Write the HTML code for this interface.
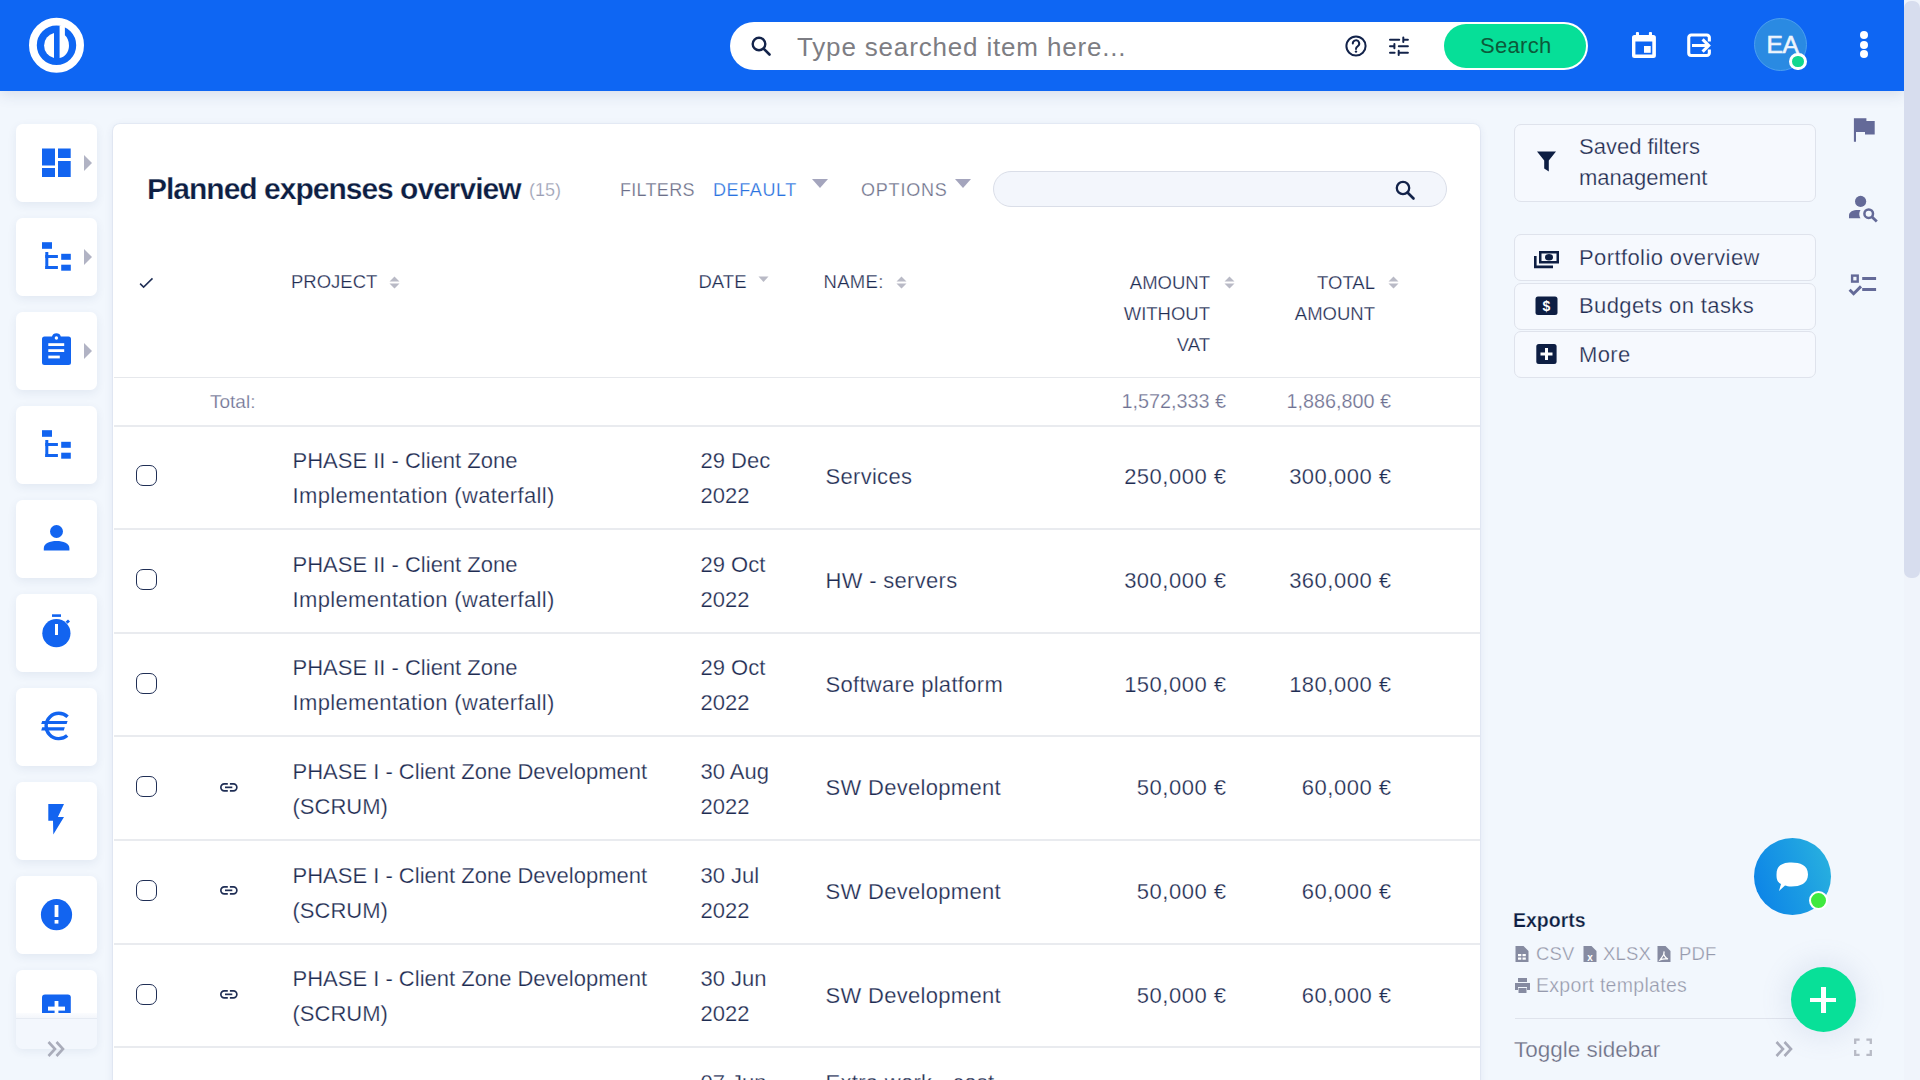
<!DOCTYPE html>
<html><head><meta charset="utf-8">
<style>
*{box-sizing:border-box;margin:0;padding:0}
html,body{width:1920px;height:1080px;overflow:hidden}
body{font-family:"Liberation Sans",sans-serif;background:#f2f7fd;position:relative;color:#1d2b4f}
.abs{position:absolute}
#hdr{left:0;top:0;width:1904px;height:91px;background:#0e66f3;box-shadow:0 3px 14px rgba(60,80,130,.16)}
#sb{left:1904px;top:0;width:16px;height:1080px;background:#f0f4fb}
#sbthumb{left:1904px;top:1px;width:16px;height:577px;background:#d7ddee;border-radius:7px}
.lcard{position:absolute;left:16px;width:81px;height:78px;background:#fff;border-radius:6.5px;box-shadow:0 3px 10px rgba(40,60,120,.08)}
.lcard svg{position:absolute}
.arr{position:absolute;left:68px;top:31px;width:0;height:0;border-top:8px solid transparent;border-bottom:8px solid transparent;border-left:8px solid #b1b3c4}
#main{left:113px;top:124px;width:1367px;height:1000px;background:#fff;border-radius:7px;box-shadow:0 0 0 1px rgba(60,80,130,.05),0 2px 10px rgba(40,60,120,.09)}
.t{position:absolute;white-space:nowrap;line-height:1}
#main ~ .t{-webkit-text-stroke:0.25px #fff}
.hline{position:absolute;left:114px;width:1366px;height:2px;background:#e9ebef}
.chk{position:absolute;left:136px;width:21px;height:21px;border:1.7px solid #1f2e55;border-radius:7px;background:#fff}
.rbox{position:absolute;left:1514px;width:302px;background:#f6f9fe;border:1px solid #dfe3ec;border-radius:7px}
</style></head><body>
<div id="hdr" class="abs"></div>
<!-- logo -->
<svg class="abs" style="left:0;top:0" width="120" height="90" viewBox="0 0 120 90">
  <circle cx="56.5" cy="45.3" r="23.6" fill="none" stroke="#fff" stroke-width="7.8"/>
  <path d="M54 32.9 A12.9 12.9 0 0 0 54 58 Z" fill="#fff"/>
  <path d="M59.6 25.5 H64.9 V35.3 C67.3 37.2 69 41 69 45.8 C69 52.3 64.8 57.3 59.6 58 Z" fill="#fff"/>
</svg>
<!-- search -->
<div class="abs" style="left:730px;top:22px;width:858px;height:48px;background:#fff;border-radius:24px"></div>
<svg class="abs" style="left:750px;top:35px" width="22" height="22" viewBox="0 0 22 22"><circle cx="9" cy="9" r="6.3" fill="none" stroke="#13234a" stroke-width="2.4"/><path d="M13.6 13.6 L19.5 19.5" stroke="#13234a" stroke-width="2.6" stroke-linecap="round"/></svg>
<div class="t" style="left:797px;top:34px;font-size:26px;color:#7d7d83;letter-spacing:0.83px">Type searched item here...</div>
<svg class="abs" style="left:1343px;top:33px" width="26" height="26" viewBox="0 0 26 26"><circle cx="13" cy="13" r="9.6" fill="none" stroke="#13234a" stroke-width="2"/><path d="M9.8 10.6 A3.2 3.2 0 1 1 14.6 13.3 C13.4 14 13 14.6 13 16" fill="none" stroke="#13234a" stroke-width="2" stroke-linecap="round"/><circle cx="13" cy="18.6" r="1.2" fill="#13234a"/></svg>
<svg class="abs" style="left:1387px;top:35px" width="24" height="22" viewBox="0 0 24 22"><g stroke="#13234a" stroke-width="2" stroke-linecap="round" fill="none"><path d="M3 4.85 H12.2 M16.3 2.6 V6.9 M16.3 4.85 H20.9 M3 11.2 H7.4 M7.4 9.1 V13.2 M11.8 11.2 H20.9 M3 17.85 H7.6 M11.7 15.7 V20 M11.7 17.85 H20.9"/></g></svg>
<div class="abs" style="left:1444px;top:24px;width:142px;height:44px;background:#06df98;border-radius:22px"></div>
<div class="t" style="left:1480px;top:35px;font-size:22px;color:#0c5a3a;letter-spacing:0.3px">Search</div>
<!-- calendar -->
<svg class="abs" style="left:1630px;top:30px" width="28" height="30" viewBox="0 0 28 30"><g fill="#fff"><rect x="5.9" y="2" width="3.1" height="5" rx="1"/><rect x="18.9" y="2" width="3.1" height="5" rx="1"/><path d="M4.5 5.1 H23.4 A2.5 2.5 0 0 1 25.9 7.6 V25.5 A2.5 2.5 0 0 1 23.4 28 H4.5 A2.5 2.5 0 0 1 2 25.5 V7.6 A2.5 2.5 0 0 1 4.5 5.1 Z M5.4 11.4 V24.6 H22.3 V11.4 Z" fill-rule="evenodd"/><rect x="14" y="16" width="6.7" height="6.8"/></g></svg>
<!-- logout -->
<svg class="abs" style="left:1685px;top:31px" width="28" height="28" viewBox="0 0 28 28"><g fill="none" stroke="#fff" stroke-width="3.1"><path d="M24.35 10.6 V6.6 A2.5 2.5 0 0 0 21.85 4.05 H6.25 A2.5 2.5 0 0 0 3.75 6.6 V21.95 A2.5 2.5 0 0 0 6.25 24.45 H21.85 A2.5 2.5 0 0 0 24.35 21.95 V18.4"/><path d="M7 14.5 H24 M17.6 8.4 L23.7 14.5 L17.6 20.6"/></g></svg>
<!-- avatar -->
<div class="abs" style="left:1754px;top:18px;width:53px;height:53px;border-radius:50%;background:#2a8ae2;border:1px solid #4b9ff0"></div>
<div class="t" style="left:1766.5px;top:33.4px;font-size:24.5px;color:#eef5fd;letter-spacing:-0.3px;-webkit-text-stroke:0.6px #eef5fd">EA</div>
<div class="abs" style="left:1789.4px;top:52.5px;width:17.6px;height:17.6px;border-radius:50%;background:#12d68f;border:3px solid #fff"></div>
<!-- kebab -->
<div class="abs" style="left:1860px;top:31px;width:8px;height:8px;border-radius:50%;background:#fff"></div>
<div class="abs" style="left:1860px;top:40.5px;width:8px;height:8px;border-radius:50%;background:#fff"></div>
<div class="abs" style="left:1860px;top:50px;width:8px;height:8px;border-radius:50%;background:#fff"></div>
<div id="sb" class="abs"></div>
<div id="sbthumb" class="abs"></div>
<!-- main card -->
<div id="main" class="abs"></div>
<div class="t" style="left:147px;top:174.4px;font-size:30px;font-weight:700;letter-spacing:-1px;color:#0d1e43">Planned expenses overview</div>
<div class="t" style="left:529px;top:180.8px;font-size:18px;color:#9a9db2">(15)</div>
<div class="t" style="left:620px;top:180.6px;font-size:18px;letter-spacing:0.3px;color:#6c6f89">FILTERS</div>
<div class="t" style="left:713px;top:180.6px;font-size:18px;letter-spacing:0.6px;color:#2a72e0">DEFAULT</div>
<div class="abs" style="left:812px;top:179px;width:0;height:0;border-left:8.5px solid transparent;border-right:8.5px solid transparent;border-top:9px solid #a4a5bd"></div>
<div class="t" style="left:861px;top:180.6px;font-size:18px;letter-spacing:0.8px;color:#6c6f89">OPTIONS</div>
<div class="abs" style="left:955px;top:179px;width:0;height:0;border-left:8.5px solid transparent;border-right:8.5px solid transparent;border-top:9px solid #a4a5bd"></div>
<div class="abs" style="left:993px;top:171px;width:454px;height:36px;background:#f3f6fc;border:1px solid #dadee8;border-radius:18px"></div>
<svg class="abs" style="left:1394px;top:179px" width="22" height="22" viewBox="0 0 22 22"><circle cx="9" cy="9" r="6.2" fill="none" stroke="#13234a" stroke-width="2.3"/><path d="M13.5 13.5 L19.5 19.5" stroke="#13234a" stroke-width="2.6" stroke-linecap="round"/></svg>
<!-- table header -->
<svg class="abs" style="left:137px;top:274px" width="18" height="16" viewBox="0 0 18 16"><path d="M3.1 9.6 L6.6 13.1 L15.5 4.4" fill="none" stroke="#1f2e55" stroke-width="1.5"/></svg>
<div class="t" style="left:291px;top:273.3px;font-size:18.5px;color:#1e2c52">PROJECT</div>
<svg class="abs" style="left:388.5px;top:276px" width="11" height="13" viewBox="0 0 11 13"><path d="M5.5 0.5 L10.5 5.5 H0.5 Z M0.5 7.5 H10.5 L5.5 12.5 Z" fill="#b9bac6"/></svg>
<div class="t" style="left:698.5px;top:273.3px;font-size:18.5px;color:#1e2c52">DATE</div>
<svg class="abs" style="left:758px;top:276px" width="11" height="7" viewBox="0 0 11 7"><path d="M0.5 0.5 H10.5 L5.5 6 Z" fill="#b9bac6"/></svg>
<div class="t" style="left:823.5px;top:273.3px;font-size:18.5px;letter-spacing:0.3px;color:#1e2c52">NAME:</div>
<svg class="abs" style="left:896px;top:276px" width="11" height="13" viewBox="0 0 11 13"><path d="M5.5 0.5 L10.5 5.5 H0.5 Z M0.5 7.5 H10.5 L5.5 12.5 Z" fill="#b9bac6"/></svg>
<div class="t" style="left:1010px;width:200px;text-align:right;top:267.1px;font-size:18.5px;line-height:31px;white-space:normal;color:#1e2c52">AMOUNT<br>WITHOUT<br>VAT</div>
<svg class="abs" style="left:1223.5px;top:276px" width="11" height="13" viewBox="0 0 11 13"><path d="M5.5 0.5 L10.5 5.5 H0.5 Z M0.5 7.5 H10.5 L5.5 12.5 Z" fill="#b9bac6"/></svg>
<div class="t" style="left:1175px;width:200px;text-align:right;top:267.1px;font-size:18.5px;line-height:31px;white-space:normal;color:#1e2c52">TOTAL<br>AMOUNT</div>
<svg class="abs" style="left:1388px;top:276px" width="11" height="13" viewBox="0 0 11 13"><path d="M5.5 0.5 L10.5 5.5 H0.5 Z M0.5 7.5 H10.5 L5.5 12.5 Z" fill="#b9bac6"/></svg>
<div class="hline" style="top:377px;height:1px;background:#e6e8ec"></div>
<div class="t" style="left:210px;top:392.4px;font-size:19px;color:#6e7191">Total:</div>
<div class="t" style="left:1026px;width:200px;text-align:right;top:391.7px;font-size:19.8px;color:#6e7191">1,572,333 €</div>
<div class="t" style="left:1191px;width:200px;text-align:right;top:391.7px;font-size:19.8px;color:#6e7191">1,886,800 €</div>
<div class="hline" style="top:424.5px;height:2px"></div>
<div class="t" style="left:292.5px;top:443.1px;font-size:22px;line-height:35px;color:#1e2c52">PHASE II - Client Zone<br><span style="letter-spacing:0.35px">Implementation (waterfall)</span></div>
<div class="t" style="left:700.5px;top:443.1px;font-size:22px;line-height:35px;color:#1e2c52">29 Dec<br>2022</div>
<div class="t" style="left:825.5px;top:466.4px;font-size:22px;letter-spacing:0.3px;color:#1e2c52">Services</div>
<div class="t" style="left:1026px;width:200px;text-align:right;top:466.4px;font-size:22px;letter-spacing:0.5px;margin-left:0.5px;color:#1e2c52">250,000 €</div>
<div class="t" style="left:1191px;width:200px;text-align:right;top:466.4px;font-size:22px;letter-spacing:0.5px;margin-left:0.5px;color:#1e2c52">300,000 €</div>
<div class="chk" style="top:465.4px"></div>
<div class="hline" style="top:528.1px;height:2px"></div>
<div class="t" style="left:292.5px;top:546.7px;font-size:22px;line-height:35px;color:#1e2c52">PHASE II - Client Zone<br><span style="letter-spacing:0.35px">Implementation (waterfall)</span></div>
<div class="t" style="left:700.5px;top:546.7px;font-size:22px;line-height:35px;color:#1e2c52">29 Oct<br>2022</div>
<div class="t" style="left:825.5px;top:570.0px;font-size:22px;letter-spacing:0.3px;color:#1e2c52">HW - servers</div>
<div class="t" style="left:1026px;width:200px;text-align:right;top:570.0px;font-size:22px;letter-spacing:0.5px;margin-left:0.5px;color:#1e2c52">300,000 €</div>
<div class="t" style="left:1191px;width:200px;text-align:right;top:570.0px;font-size:22px;letter-spacing:0.5px;margin-left:0.5px;color:#1e2c52">360,000 €</div>
<div class="chk" style="top:569.1px"></div>
<div class="hline" style="top:631.7px;height:2px"></div>
<div class="t" style="left:292.5px;top:650.4px;font-size:22px;line-height:35px;color:#1e2c52">PHASE II - Client Zone<br><span style="letter-spacing:0.35px">Implementation (waterfall)</span></div>
<div class="t" style="left:700.5px;top:650.4px;font-size:22px;line-height:35px;color:#1e2c52">29 Oct<br>2022</div>
<div class="t" style="left:825.5px;top:673.7px;font-size:22px;letter-spacing:0.3px;color:#1e2c52">Software platform</div>
<div class="t" style="left:1026px;width:200px;text-align:right;top:673.7px;font-size:22px;letter-spacing:0.5px;margin-left:0.5px;color:#1e2c52">150,000 €</div>
<div class="t" style="left:1191px;width:200px;text-align:right;top:673.7px;font-size:22px;letter-spacing:0.5px;margin-left:0.5px;color:#1e2c52">180,000 €</div>
<div class="chk" style="top:672.7px"></div>
<div class="hline" style="top:735.4px;height:2px"></div>
<div class="t" style="left:292.5px;top:754.1px;font-size:22px;line-height:35px;color:#1e2c52">PHASE I - Client Zone Development<br>(SCRUM)</div>
<div class="t" style="left:700.5px;top:754.1px;font-size:22px;line-height:35px;color:#1e2c52">30 Aug<br>2022</div>
<div class="t" style="left:825.5px;top:777.4px;font-size:22px;letter-spacing:0.3px;color:#1e2c52">SW Development</div>
<div class="t" style="left:1026px;width:200px;text-align:right;top:777.4px;font-size:22px;letter-spacing:0.5px;margin-left:0.5px;color:#1e2c52">50,000 €</div>
<div class="t" style="left:1191px;width:200px;text-align:right;top:777.4px;font-size:22px;letter-spacing:0.5px;margin-left:0.5px;color:#1e2c52">60,000 €</div>
<div class="chk" style="top:776.4px"></div>
<svg class="abs" style="left:218px;top:780.5px" width="22" height="14" viewBox="0 0 22 14"><g fill="none" stroke="#1f2e55" stroke-width="1.7"><path d="M9.8 2.9 H6.3 A3.45 3.45 0 0 0 6.3 9.8 H9.8"/><path d="M11.9 2.9 H15.4 A3.45 3.45 0 0 1 15.4 9.8 H11.9"/><path d="M7 6.35 H14.3"/></g></svg>
<div class="hline" style="top:839.1px;height:2px"></div>
<div class="t" style="left:292.5px;top:857.8px;font-size:22px;line-height:35px;color:#1e2c52">PHASE I - Client Zone Development<br>(SCRUM)</div>
<div class="t" style="left:700.5px;top:857.8px;font-size:22px;line-height:35px;color:#1e2c52">30 Jul<br>2022</div>
<div class="t" style="left:825.5px;top:881.1px;font-size:22px;letter-spacing:0.3px;color:#1e2c52">SW Development</div>
<div class="t" style="left:1026px;width:200px;text-align:right;top:881.1px;font-size:22px;letter-spacing:0.5px;margin-left:0.5px;color:#1e2c52">50,000 €</div>
<div class="t" style="left:1191px;width:200px;text-align:right;top:881.1px;font-size:22px;letter-spacing:0.5px;margin-left:0.5px;color:#1e2c52">60,000 €</div>
<div class="chk" style="top:880.1px"></div>
<svg class="abs" style="left:218px;top:884.2px" width="22" height="14" viewBox="0 0 22 14"><g fill="none" stroke="#1f2e55" stroke-width="1.7"><path d="M9.8 2.9 H6.3 A3.45 3.45 0 0 0 6.3 9.8 H9.8"/><path d="M11.9 2.9 H15.4 A3.45 3.45 0 0 1 15.4 9.8 H11.9"/><path d="M7 6.35 H14.3"/></g></svg>
<div class="hline" style="top:942.7px;height:2px"></div>
<div class="t" style="left:292.5px;top:961.4px;font-size:22px;line-height:35px;color:#1e2c52">PHASE I - Client Zone Development<br>(SCRUM)</div>
<div class="t" style="left:700.5px;top:961.4px;font-size:22px;line-height:35px;color:#1e2c52">30 Jun<br>2022</div>
<div class="t" style="left:825.5px;top:984.7px;font-size:22px;letter-spacing:0.3px;color:#1e2c52">SW Development</div>
<div class="t" style="left:1026px;width:200px;text-align:right;top:984.7px;font-size:22px;letter-spacing:0.5px;margin-left:0.5px;color:#1e2c52">50,000 €</div>
<div class="t" style="left:1191px;width:200px;text-align:right;top:984.7px;font-size:22px;letter-spacing:0.5px;margin-left:0.5px;color:#1e2c52">60,000 €</div>
<div class="chk" style="top:983.8px"></div>
<svg class="abs" style="left:218px;top:987.9px" width="22" height="14" viewBox="0 0 22 14"><g fill="none" stroke="#1f2e55" stroke-width="1.7"><path d="M9.8 2.9 H6.3 A3.45 3.45 0 0 0 6.3 9.8 H9.8"/><path d="M11.9 2.9 H15.4 A3.45 3.45 0 0 1 15.4 9.8 H11.9"/><path d="M7 6.35 H14.3"/></g></svg>
<div class="hline" style="top:1046.4px;height:2px"></div>
<div class="t" style="left:292.5px;top:1065.1px;font-size:22px;line-height:35px;color:#1e2c52"><br></div>
<div class="t" style="left:700.5px;top:1065.1px;font-size:22px;line-height:35px;color:#1e2c52">07 Jun<br>2022</div>
<div class="t" style="left:825.5px;top:1065.1px;font-size:22px;letter-spacing:0.3px;line-height:35px;color:#1e2c52">Extra work - cost</div>
<!-- right sidebar -->
<div class="rbox" style="top:124px;height:78px"></div>
<svg class="abs" style="left:1536px;top:150px" width="21" height="23" viewBox="0 0 21 23"><path d="M1 1.5 H20 L12.8 10.5 V21.5 L8.2 18.5 V10.5 Z" fill="#0d1e43"/></svg>
<div class="t" style="left:1579px;top:131.2px;font-size:22px;line-height:31px;color:#1e2c52">Saved filters<br>management</div>
<div class="rbox" style="top:234px;height:47px"></div>
<div class="rbox" style="top:283px;height:47px"></div>
<div class="rbox" style="top:331px;height:47px"></div>
<svg class="abs" style="left:1532px;top:249px" width="28" height="22" viewBox="0 0 28 22"><g fill="#0d1e43"><path d="M7 2 H27 V14.5 H7 Z M9.5 4.4 V12.1 H24.5 V4.4 Z" fill-rule="evenodd"/><ellipse cx="17" cy="8.3" rx="4" ry="3.2"/><path d="M2 7 H4.6 V16.6 H21 V19.2 H2 Z"/></g></svg>
<svg class="abs" style="left:1535px;top:296px" width="23" height="20" viewBox="0 0 23 20"><rect x="0.5" y="0.5" width="22" height="18.5" rx="2.5" fill="#0d1e43"/><text x="11.5" y="15" text-anchor="middle" font-family="Liberation Sans" font-weight="700" font-size="14" fill="#fff">$</text></svg>
<svg class="abs" style="left:1536px;top:344px" width="21" height="20" viewBox="0 0 21 20"><rect x="0.3" y="0" width="20.3" height="20" rx="2.5" fill="#0d1e43"/><rect x="9" y="4" width="3" height="12" fill="#fff"/><rect x="4.5" y="8.5" width="12" height="3" fill="#fff"/></svg>
<div class="t" style="left:1579px;top:246.6px;font-size:22px;letter-spacing:0.4px;color:#1e2c52">Portfolio overview</div>
<div class="t" style="left:1579px;top:295.4px;font-size:22px;letter-spacing:0.4px;color:#1e2c52">Budgets on tasks</div>
<div class="t" style="left:1579px;top:343.8px;font-size:22px;letter-spacing:0.4px;color:#1e2c52">More</div>
<!-- right icon column -->
<svg class="abs" style="left:1852px;top:116px" width="26" height="28" viewBox="0 0 26 28"><path d="M1.9 2.2 H14.4 V5 H22.7 V18.6 H13 V15.9 H4 V25.8 H1.9 Z" fill="#646a98"/></svg>
<svg class="abs" style="left:1848px;top:194px" width="32" height="32" viewBox="0 0 32 32"><g fill="#646a98"><circle cx="12.6" cy="7.4" r="5.6"/><path d="M1 24.3 V21.5 C1 17.8 5 16 10 16 H12.6 C11.6 17.3 11.2 19 11.3 20.8 C11.4 22.2 11.8 23.3 12.5 24.3 Z"/></g><circle cx="20.7" cy="19.7" r="4.3" fill="none" stroke="#646a98" stroke-width="2.5"/><path d="M23.8 22.8 L28.8 27.6" stroke="#646a98" stroke-width="2.8"/></svg>
<svg class="abs" style="left:1848px;top:272px" width="30" height="26" viewBox="0 0 30 26"><g fill="none" stroke="#646a98"><rect x="4.1" y="3.6" width="5.6" height="6" stroke-width="2.4"/><path d="M14.2 6.5 H28.1 M14.2 17.6 H28.1" stroke-width="3"/><path d="M1.6 17.8 L5.6 21.8 L13 14.4" stroke-width="2.9"/></g></svg>
<!-- chat -->
<div class="abs" style="left:1754px;top:838px;width:77px;height:77px;border-radius:50%;background:linear-gradient(70deg,#0a80e8 0%,#1b9ce3 55%,#2bb4de 100%)"></div>
<svg class="abs" style="left:1774px;top:860px" width="38" height="34" viewBox="0 0 38 34"><path d="M17.5 2.5 C26 2.5 34 5 34 14.5 C34 23.5 26 26.5 17.5 26.5 C14.5 26.5 12.5 26 11 25.5 L5 31 L7 24 C3 22 2.5 18.5 2.5 14.5 C2.5 5 9 2.5 17.5 2.5 Z" fill="#fff"/></svg>
<div class="abs" style="left:1809px;top:891px;width:19px;height:19px;border-radius:50%;background:#3fe93f;border:2.2px solid #fff"></div>
<!-- exports -->
<div class="t" style="left:1513px;top:911.3px;font-size:19.5px;font-weight:700;color:#0d1e43">Exports</div>
<svg class="abs" style="left:1514px;top:945px" width="16" height="18" viewBox="0 0 16 18"><path d="M1.5 1 H9.5 L14.5 6 V17 H1.5 Z" fill="#868ba1"/><g fill="#fff"><rect x="4" y="9" width="3.3" height="2.2"/><rect x="8.5" y="9" width="3.3" height="2.2"/><rect x="4" y="12.5" width="3.3" height="2.2"/><rect x="8.5" y="12.5" width="3.3" height="2.2"/></g></svg>
<div class="t" style="left:1536px;top:944.9px;font-size:18.5px;color:#959aae;letter-spacing:0.2px">CSV</div>
<svg class="abs" style="left:1582px;top:945px" width="16" height="18" viewBox="0 0 16 18"><path d="M1.5 1 H9.5 L14.5 6 V17 H1.5 Z" fill="#868ba1"/><text x="8" y="15.5" text-anchor="middle" font-family="Liberation Sans" font-weight="700" font-size="10" fill="#fff">x</text></svg>
<div class="t" style="left:1603px;top:944.9px;font-size:18.5px;color:#959aae;letter-spacing:0.2px">XLSX</div>
<svg class="abs" style="left:1656px;top:945px" width="16" height="18" viewBox="0 0 16 18"><path d="M1.5 1 H9.5 L14.5 6 V17 H1.5 Z" fill="#868ba1"/><path d="M4 15 C6 12 9 9 8 7 C7 9 9 13 12 14 C9 13.5 6 14 4 15 Z" fill="none" stroke="#fff" stroke-width="1.2"/></svg>
<div class="t" style="left:1679px;top:944.9px;font-size:18.5px;color:#959aae;letter-spacing:0.2px">PDF</div>
<svg class="abs" style="left:1514px;top:977px" width="17" height="17" viewBox="0 0 17 17"><g fill="#868ba1"><rect x="4" y="1" width="9" height="4"/><path d="M1 6 H16 V13 H13 V10 H4 V13 H1 Z"/><rect x="4.5" y="11" width="8" height="5"/></g></svg>
<div class="t" style="left:1536px;top:976.3px;font-size:19.5px;color:#959aae;letter-spacing:0.3px">Export templates</div>
<div class="abs" style="left:1515px;top:1018px;width:300px;height:1px;background:#dfe3ec"></div>
<div class="t" style="left:1514px;top:1039.0px;font-size:22.5px;color:#6b6f87">Toggle sidebar</div>
<svg class="abs" style="left:1774px;top:1040px" width="22" height="18" viewBox="0 0 22 18"><g fill="none" stroke="#a9acba" stroke-width="2.6"><path d="M2.5 2 L9 9 L2.5 16"/><path d="M10.5 2 L17 9 L10.5 16"/></g></svg>
<svg class="abs" style="left:1853px;top:1037px" width="20" height="20" viewBox="0 0 20 20"><g fill="none" stroke="#b8bbc6" stroke-width="2.3"><path d="M2.2 7 V2.6 H6.6 M13.4 2.6 H17.8 V7 M17.8 13 V17.8 H13.4 M6.6 17.8 H2.2 V13"/></g></svg>
<!-- fab -->
<div class="abs" style="left:1791px;top:967px;width:65px;height:65px;border-radius:50%;background:#08e098;box-shadow:0 0 24px 8px rgba(120,140,180,.12)"></div>
<div class="abs" style="left:1810.4px;top:998px;width:25.6px;height:4.2px;background:#fff"></div>
<div class="abs" style="left:1821.3px;top:987px;width:4.3px;height:25.5px;background:#fff"></div>
<!-- left sidebar -->
<div class="lcard" style="top:124px"><div class="arr" style="top:31px"></div></div>
<div class="lcard" style="top:218px"><div class="arr"></div></div>
<div class="lcard" style="top:312px"><div class="arr"></div></div>
<div class="lcard" style="top:406px"></div>
<div class="lcard" style="top:500px"></div>
<div class="lcard" style="top:594px"></div>
<div class="lcard" style="top:688px"></div>
<div class="lcard" style="top:782px"></div>
<div class="lcard" style="top:876px"></div>
<div class="lcard" style="top:970px;overflow:hidden">
  <div class="abs" style="left:0;top:48px;width:81px;height:30px;background:#f3f7fd;border-top:1px solid #e8edf5"></div>
</div>
<svg class="abs" style="left:0;top:100px" width="110" height="980" viewBox="0 100 110 980">
<g fill="#1264f0">
  <!-- dashboard -->
  <rect x="42" y="148.5" width="13" height="17"/><rect x="42" y="168" width="13" height="9"/>
  <rect x="58" y="148.5" width="12.7" height="9.5"/><rect x="58" y="161" width="12.7" height="16"/>
  <!-- tree 1 -->
  <rect x="42" y="242.2" width="10" height="6.6"/><rect x="45.3" y="252" width="3" height="17"/>
  <rect x="45.3" y="255" width="12.6" height="3"/><rect x="45.3" y="266" width="12.6" height="3"/>
  <rect x="61.2" y="253.8" width="9.6" height="6"/><rect x="61.2" y="264.7" width="9.6" height="6"/>
  <!-- clipboard -->
  <path d="M44.5 336.6 H52 A4.6 4.6 0 0 1 60.8 336.6 H68.5 A2.5 2.5 0 0 1 71 339.1 V362.5 A2.5 2.5 0 0 1 68.5 365 H44.5 A2.5 2.5 0 0 1 42 362.5 V339.1 A2.5 2.5 0 0 1 44.5 336.6 Z"/>
  <!-- tree 2 -->
  <rect x="42" y="430.2" width="10" height="6.6"/><rect x="45.3" y="440" width="3" height="17"/>
  <rect x="45.3" y="443" width="12.6" height="3"/><rect x="45.3" y="454" width="12.6" height="3"/>
  <rect x="61.2" y="441.8" width="9.6" height="6"/><rect x="61.2" y="452.7" width="9.6" height="6"/>
  <!-- person -->
  <circle cx="56.5" cy="531.5" r="6.5"/>
  <path d="M43.8 550.5 V548 C43.8 543.5 50 541 56.6 541 C63.2 541 69.4 543.5 69.4 548 V550.5 Z"/>
  <!-- stopwatch -->
  <circle cx="56.4" cy="633.2" r="14.1"/><rect x="52" y="614.3" width="9" height="2.6"/>
  <path d="M65.6 621.8 L68 619.4 L70 621.4 L67.6 623.8 Z"/>
  <!-- euro -->
  <!-- lightning -->
  <path d="M48.3 804 H64 L57.9 817 H64 L53.3 834.6 L53 820.8 H48.3 Z"/>
  <!-- exclamation -->
  <circle cx="56.5" cy="914.7" r="15.6"/>
  <!-- add -->
  <rect x="42" y="994.5" width="28.8" height="26" rx="3"/>
</g>
<g fill="#fff">
  <rect x="48.3" y="343.2" width="15.9" height="2.8"/><rect x="48.3" y="349.2" width="15.9" height="2.8"/><rect x="48.3" y="355.6" width="11.5" height="2.8"/>
  <circle cx="56.4" cy="338" r="1.7"/>
  <rect x="55" y="624" width="3" height="11"/>
  <rect x="54.6" y="905" width="3.8" height="12"/><rect x="54.6" y="920" width="3.8" height="3.6"/>
  <rect x="54.6" y="1001" width="3.8" height="16"/><rect x="48" y="1006.6" width="17" height="4"/>
</g>
<g fill="none" stroke="#1264f0" stroke-width="3.4"><path d="M67.6 716.8 A12.7 12.7 0 1 0 67.2 735.5"/></g>
<g fill="#1264f0"><path d="M42.2 721 H67.6 L66.6 724 H41.2 Z"/><path d="M42.2 727.3 H64.8 L63.8 730.5 H41.2 Z"/></g>
</svg>
<div class="abs" style="left:16px;top:1012.6px;width:81px;height:5.4px;background:linear-gradient(#fbfcfe,#f3f6fb)"></div><div class="abs" style="left:16px;top:1018px;width:81px;height:30.5px;background:#f3f7fd;border-top:1.5px solid #e6ebf3;border-radius:0 0 6.5px 6.5px"></div>
<svg class="abs" style="left:46px;top:1040px" width="22" height="18" viewBox="0 0 22 18"><g fill="none" stroke="#a9acba" stroke-width="2.6"><path d="M2.5 2 L9 9 L2.5 16"/><path d="M10.5 2 L17 9 L10.5 16"/></g></svg>
</body></html>
